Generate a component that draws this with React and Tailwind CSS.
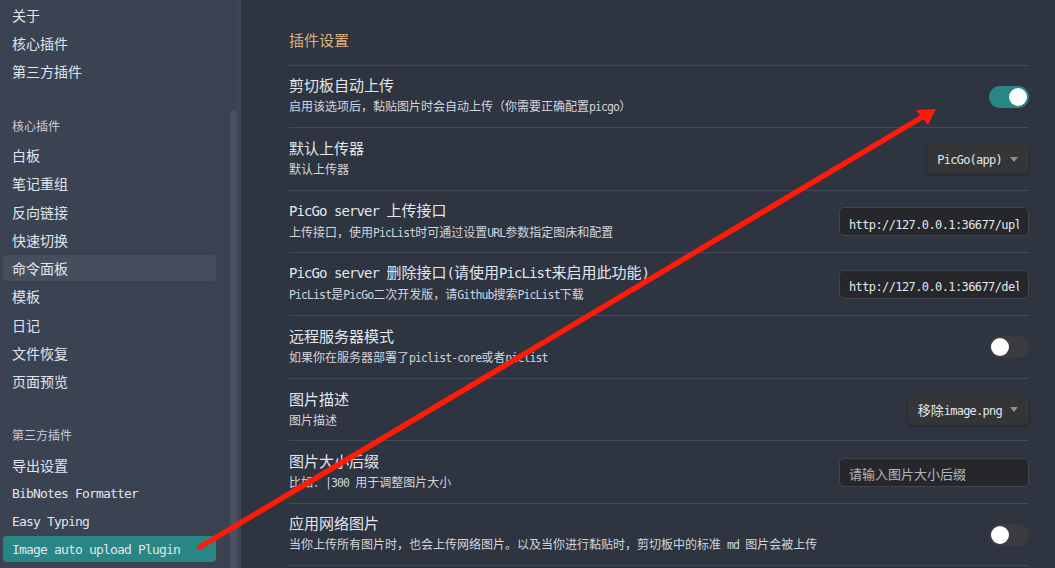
import React from "react";

const LAT_SIDE = "font-['DejaVu_Sans_Mono',monospace] text-[13px] tracking-[-0.83px]";
const LAT_TITLE = "font-['DejaVu_Sans_Mono',monospace] text-[14px] tracking-[-0.93px]";
const LAT_DESC = "font-['DejaVu_Sans_Mono',monospace] text-[11.5px] tracking-[-0.9px]";
const LAT_CTRL = "font-['DejaVu_Sans_Mono',monospace] text-[12px] tracking-[-0.6px]";
const LAT_DROP = "font-['DejaVu_Sans_Mono',monospace] text-[12px] tracking-[-0.75px]";

function T({ s, lat }) {
  const parts = s.split(/([\x20-\x7e]+)/);
  return (
    <>
      {parts.map((p, i) =>
        i % 2 === 1 ? (
          <span key={i} className={lat}>
            {p}
          </span>
        ) : (
          <React.Fragment key={i}>{p}</React.Fragment>
        )
      )}
    </>
  );
}

function SideItem({ label, active, selected, h = "h-[28px]" }) {
  let inner = "h-[26px] rounded-[4px] px-[9px] flex items-center whitespace-nowrap";
  if (active) inner += " bg-[#464d5d]";
  if (selected) inner += " bg-[#288784]";
  return (
    <div className={`${h} shrink-0 flex items-center`}>
      <div className={`w-full ${inner}`}>
        <span className="text-[14px] leading-[20px] text-[#e1e5eb]">
          <T s={label} lat={LAT_SIDE} />
        </span>
      </div>
    </div>
  );
}

function SideHeading({ label, cls }) {
  return (
    <div className={`h-[20px] shrink-0 flex items-center px-[9px] text-[12px] text-[#c9ced6] ${cls}`}>{label}</div>
  );
}

function Toggle({ on }) {
  return (
    <div
      className={`w-[40px] h-[22px] rounded-full p-[2px] flex items-center ${
        on ? "bg-[#288784] justify-end" : "bg-[#3a3c41] justify-start"
      }`}
    >
      <div className="w-[18px] h-[18px] rounded-full bg-white" />
    </div>
  );
}

function Dropdown({ label }) {
  return (
    <div className="h-[30px] pl-[10px] pr-[11px] rounded-[5px] bg-[#343536] shadow-[0_1px_3px_rgba(0,0,0,0.35)] flex items-center text-[13px] text-[#e3e6ea] whitespace-nowrap">
      <span>
        <T s={label} lat={LAT_DROP} />
      </span>
      <svg width="8" height="5" viewBox="0 0 8 5" className="ml-[8px]">
        <path d="M0 0 L8 0 L4 5 Z" fill="#8d8f93" />
      </svg>
    </div>
  );
}

function Input({ value, placeholder }) {
  return (
    <div className="w-[190px] h-[29px] bg-[#25272b] border border-[#40444f] rounded-[5px] px-[9px] flex items-center">
      <div className="w-full overflow-hidden whitespace-nowrap">
        {value ? (
          <span className={`${LAT_CTRL} text-[#e3e6ea]`}>{value}</span>
        ) : (
          <span className="text-[13px] text-[#b3b7be]">{placeholder}</span>
        )}
      </div>
    </div>
  );
}

function Row({ title, desc, control, h }) {
  return (
    <div className={`${h} shrink-0 border-t border-[#424958] flex items-center justify-between`}>
      <div className="flex flex-col gap-[2px] mb-[2px]">
        <div className="text-[15px] leading-[20px] text-[#e3e7ed] whitespace-nowrap">
          <T s={title} lat={LAT_TITLE} />
        </div>
        <div className="text-[12px] leading-[18px] text-[#d2d6dd] whitespace-nowrap">
          <T s={desc} lat={LAT_DESC} />
        </div>
      </div>
      <div className="flex items-center">{control}</div>
    </div>
  );
}

export default function App() {
  return (
    <div className="relative w-[1055px] h-[568px] overflow-hidden flex bg-[#2e3440] font-['Noto_Sans_CJK_SC',sans-serif]">
      {/* Sidebar */}
      <div className="w-[241px] h-full bg-[#3b4252] flex shrink-0">
        <div className="w-[216px] pl-[3px] pt-[1px] flex flex-col">
          <SideItem label="关于" />
          <SideItem label="核心插件" />
          <SideItem label="第三方插件" />
          <SideHeading label="核心插件" cls="mt-[31px] mb-[5px]" />
          <SideItem label="白板" h="h-[28.25px]" />
          <SideItem label="笔记重组" h="h-[28.25px]" />
          <SideItem label="反向链接" h="h-[28.25px]" />
          <SideItem label="快速切换" h="h-[28.25px]" />
          <SideItem label="命令面板" h="h-[28.25px]" active />
          <SideItem label="模板" h="h-[28.25px]" />
          <SideItem label="日记" h="h-[28.25px]" />
          <SideItem label="文件恢复" h="h-[28.25px]" />
          <SideItem label="页面预览" h="h-[28.25px]" />
          <SideHeading label="第三方插件" cls="mt-[30px] mb-[6px]" />
          <SideItem label="导出设置" />
          <SideItem label="BibNotes Formatter" />
          <SideItem label="Easy Typing" />
          <SideItem label="Image auto upload Plugin" selected />
        </div>
        <div className="flex-1" />
        <div className="w-[7px] h-full pt-[110px]">
          <div className="w-full h-full rounded-t-[4px] bg-[#4b5162]" />
        </div>
        <div className="w-[4px] h-full bg-[#404655]" />
      </div>

      {/* Main */}
      <div className="flex-1 h-full pl-[48px] pr-[26px] flex flex-col">
        <div className="pt-[30px] h-[65px] shrink-0">
          <div className="text-[15px] leading-[20px] text-[#dcb27e]">插件设置</div>
        </div>
        <Row
          h="h-[62px]"
          title="剪切板自动上传"
          desc="启用该选项后，黏贴图片时会自动上传（你需要正确配置picgo）"
          control={<Toggle on />}
        />
        <Row h="h-[63px]" title="默认上传器" desc="默认上传器" control={<Dropdown label="PicGo(app)" />} />
        <Row
          h="h-[62px]"
          title="PicGo server 上传接口"
          desc="上传接口，使用PicList时可通过设置URL参数指定图床和配置"
          control={<Input value="http://127.0.0.1:36677/upload" />}
        />
        <Row
          h="h-[63px]"
          title="PicGo server 删除接口(请使用PicList来启用此功能)"
          desc="PicList是PicGo二次开发版，请Github搜索PicList下载"
          control={<Input value="http://127.0.0.1:36677/delete" />}
        />
        <Row
          h="h-[63px]"
          title="远程服务器模式"
          desc="如果你在服务器部署了piclist-core或者piclist"
          control={<Toggle />}
        />
        <Row h="h-[62px]" title="图片描述" desc="图片描述" control={<Dropdown label="移除image.png" />} />
        <Row
          h="h-[63px]"
          title="图片大小后缀"
          desc="比如：|300 用于调整图片大小"
          control={<Input placeholder="请输入图片大小后缀" />}
        />
        <Row
          h="h-[62px]"
          title="应用网络图片"
          desc="当你上传所有图片时，也会上传网络图片。以及当你进行黏贴时，剪切板中的标准 md 图片会被上传"
          control={<Toggle />}
        />
        <div className="h-[10px] shrink-0 border-t border-[#424958]" />
      </div>

      {/* Red annotation arrow */}
      <svg
        className="absolute inset-0 pointer-events-none"
        width="1055"
        height="568"
        viewBox="0 0 1055 568"
      >
        <line x1="200" y1="547" x2="924" y2="116" stroke="#ff1a0a" strokeWidth="5.5" strokeLinecap="round" />
        <polygon points="936,109 916,110 928,125" fill="#ff1a0a" />
      </svg>
    </div>
  );
}
